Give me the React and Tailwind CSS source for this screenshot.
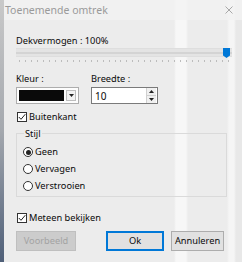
import { useState } from "react";

function Check({ label, checked }) {
  return (
    <div className="flex items-center h-[12px] pl-[1px]">
      <div className="w-[10px] h-[10px] border border-[#333] bg-white flex items-center justify-center">
        {checked && (
          <svg width="8" height="8" viewBox="0 0 8 8">
            <path d="M0.8 4 L3 6.3 L7.3 1.2" fill="none" stroke="#222" strokeWidth="1" />
          </svg>
        )}
      </div>
      <span className="ml-[2px] text-[#0a0a0a]">{label}</span>
    </div>
  );
}

function Radio({ label, checked }) {
  return (
    <div className="flex items-center h-[12px]">
      <div className="w-[10px] h-[10px] rounded-full border border-[#333] bg-white flex items-center justify-center">
        {checked && <div className="w-[5px] h-[5px] rounded-full bg-[#222]" />}
      </div>
      <span className="ml-[2px] text-[#0a0a0a]">{label}</span>
    </div>
  );
}

export default function App() {
  const [width] = useState(10);
  const ticks = Array.from({ length: 36 });

  return (
    <div
      className="w-[242px] h-[262px] flex overflow-hidden text-[9.25px] leading-[12px]"
      style={{ fontFamily: '"Noto Sans", "Open Sans", sans-serif' }}
    >
      <div className="w-[4px] h-full bg-gradient-to-b from-[#c9c9c9] via-[#a4a8ae] to-[#4f5f78]" />
      <div className="flex-1 flex flex-col bg-[linear-gradient(90deg,#ececec_0px,#ececec_170px,#f7f7f7_172px,#f7f7f7_182px,#ececec_184px,#ececec_223px,#f5f5f5_225px,#f5f5f5_230px,#e8e8e8_232px)]">
        <div className="h-[20px] flex items-center justify-between bg-[#f3f3f3]/80 pl-[1px] pr-[9px]">
          <span className="text-[#9a9a9a] text-[10.5px]">Toenemende omtrek</span>
          <svg width="8" height="8" viewBox="0 0 8 8">
            <path d="M0.5 0.5 L7.5 7.5 M7.5 0.5 L0.5 7.5" stroke="#a8a8a8" strokeWidth="1" />
          </svg>
        </div>

        <div className="flex flex-col pl-[12px] pr-[6px]">
          <div className="mt-[15px] text-[#0a0a0a]">Dekvermogen : 100%</div>

          <div className="relative h-[16px] w-[216px]">
            <div className="h-[9px] bg-[#e4e4e4] border-y border-[#dedede] flex items-center mt-[1px]">
              <div className="h-[2px] w-full bg-[#d4d4d4]" />
            </div>
            <div className="flex justify-between px-[3px] mt-[3px]">
              {ticks.map((_, i) => (
                <div key={i} className="w-[1px] h-[2px] bg-[#bcbcbc]" />
              ))}
            </div>
            <svg className="absolute left-[207px] top-[1px]" width="7" height="10" viewBox="0 0 7 10">
              <path d="M0 0 H7 V7.5 L3.5 10 L0 7.5 Z" fill="#0078d7" />
            </svg>
          </div>

          <div className="mt-[10px] flex">
            <div className="w-[75px] flex flex-col">
              <span className="text-[#0a0a0a]">Kleur :</span>
              <div className="mt-[2px] w-[63px] h-[17px] border border-[#adadad] bg-[#fdfdfd] flex items-center p-[2px]">
                <div className="flex-1 h-full bg-[#0a0a0a]" />
                <div className="ml-[2px] w-[10px] h-full border border-[#bdbdbd] bg-[#f2f2f2] flex items-center justify-center">
                  <svg width="5" height="3" viewBox="0 0 5 3">
                    <path d="M0 0 H5 L2.5 3 Z" fill="#222" />
                  </svg>
                </div>
              </div>
            </div>
            <div className="flex flex-col">
              <span className="text-[#0a0a0a]">Breedte :</span>
              <div className="mt-[2px] w-[67px] h-[17px] border border-[#7a7a7a] bg-white flex items-center">
                <span className="flex-1 pl-[3px] text-[#0a0a0a] text-[10px]">{width}</span>
                <div className="w-[10px] h-full flex flex-col border-l border-[#d0d0d0] mr-[1px]">
                  <div className="flex-1 flex items-center justify-center bg-[#f0f0f0] border-b border-[#d0d0d0]">
                    <svg width="5" height="3" viewBox="0 0 5 3">
                      <path d="M0 3 H5 L2.5 0 Z" fill="#222" />
                    </svg>
                  </div>
                  <div className="flex-1 flex items-center justify-center bg-[#f0f0f0]">
                    <svg width="5" height="3" viewBox="0 0 5 3">
                      <path d="M0 0 H5 L2.5 3 Z" fill="#222" />
                    </svg>
                  </div>
                </div>
              </div>
            </div>
          </div>

          <div className="mt-[7px]">
            <Check label="Buitenkant" checked />
          </div>

          <div className="mt-[10px] w-[211px] border border-[#dadada] flex flex-col pl-[6px] pb-[4px]">
            <span className="mt-[-6px] ml-[1px] w-fit px-[1px] bg-[#ececec] text-[#0a0a0a]">Stijl</span>
            <div className="mt-[6px] flex flex-col gap-[5px]">
              <Radio label="Geen" checked />
              <Radio label="Vervagen" />
              <Radio label="Verstrooien" />
            </div>
          </div>

          <div className="mt-[15px]">
            <Check label="Meteen bekijken" checked />
          </div>

          <div className="mt-[7px] flex items-center">
            <div className="w-[60px] h-[20px] border border-[#bfbfbf] bg-[#cccccc] text-[#a3a3a3] flex items-center justify-center">
              Voorbeeld
            </div>
            <div className="ml-[30px] w-[58px] h-[20px] border-2 border-[#0078d7] bg-[#e1e1e1] text-[#0a0a0a] flex items-center justify-center">
              Ok
            </div>
            <div className="ml-[7px] w-[53px] h-[20px] border border-[#adadad] bg-[#e1e1e1] text-[#0a0a0a] flex items-center justify-center">
              Annuleren
            </div>
          </div>
        </div>
      </div>
    </div>
  );
}
